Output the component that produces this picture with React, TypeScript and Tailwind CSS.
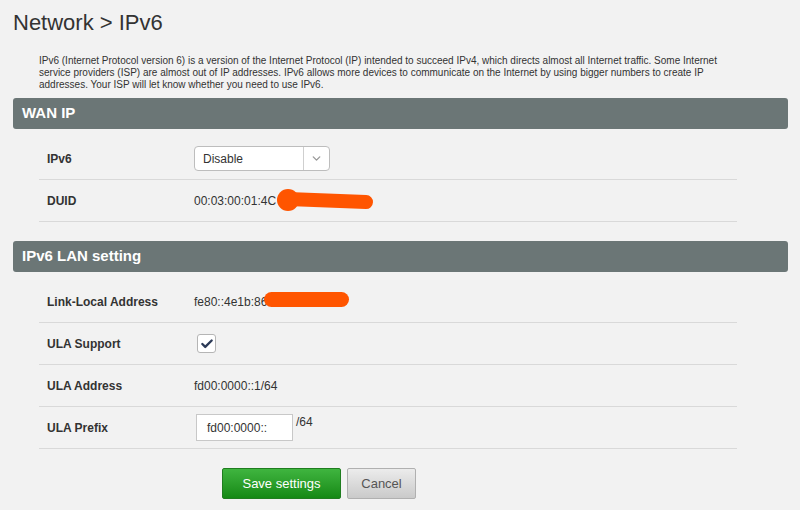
import { Check, ChevronDown } from "lucide-react";

function SectionHeader({ title }: { title: string }) {
  return (
    <div className="mx-[13px] mr-[12px] h-[31px] rounded-[3px] bg-[#6b7676] pl-[9px] flex items-center">
      <h2 className="text-[15px] font-bold text-white">{title}</h2>
    </div>
  );
}

function Row({
  label,
  children,
  valueClass = "items-center",
}: {
  label: string;
  children: React.ReactNode;
  valueClass?: string;
}) {
  return (
    <div className="flex h-[42px] items-center border-b border-[#d9d9d9] pl-2">
      <div className="w-[147px] text-[12px] font-bold text-[#333]">{label}</div>
      <div className={`relative flex h-full flex-1 ${valueClass}`}>{children}</div>
    </div>
  );
}

export default function App() {
  return (
    <div className="min-h-[510px] w-[800px] bg-[#f2f2f2] font-['Liberation_Sans',Arial,sans-serif] text-[#333]">
      <h1 className="pl-[13px] pt-[10px] text-[22px] leading-[26px] text-[#333]">
        Network &gt; IPv6
      </h1>

      <p className="ml-[39px] mt-[19px] w-[706px] text-[10px] leading-[12px] text-[#333]">
        IPv6 (Internet Protocol version 6) is a version of the Internet Protocol (IP) intended to
        succeed IPv4, which directs almost all Internet traffic. Some Internet service providers
        (ISP) are almost out of IP addresses. IPv6 allows more devices to communicate on the
        Internet by using bigger numbers to create IP addresses. Your ISP will let know whether
        you need to use IPv6.
      </p>

      <div className="mt-[7px]">
        <SectionHeader title="WAN IP" />
      </div>
      <div className="ml-[39px] mt-[9px] w-[698px]">
        <Row label="IPv6">
          <div className="flex h-[25px] w-[136px] items-center rounded-[4px] border border-[#bdbdbd] bg-white">
            <span className="flex-1 pl-[8px] text-[12px] text-[#333]">Disable</span>
            <span className="flex h-full w-[26px] items-center justify-center border-l border-[#cfcfcf]">
              <ChevronDown size={13} strokeWidth={2.5} className="text-[#999]" />
            </span>
          </div>
        </Row>
        <Row label="DUID">
          <span className="text-[12px] text-[#333]">00:03:00:01:4C</span>
          <svg
            className="absolute left-0 top-0"
            width="200"
            height="41"
            viewBox="0 0 200 41"
          >
            <circle cx="94" cy="20" r="11" fill="#ff5500" />
            <line
              x1="94"
              y1="19"
              x2="172"
              y2="22"
              stroke="#ff5500"
              strokeWidth="14"
              strokeLinecap="round"
            />
          </svg>
        </Row>
      </div>

      <div className="mt-[19px]">
        <SectionHeader title="IPv6 LAN setting" />
      </div>
      <div className="ml-[39px] mt-[9px] w-[698px]">
        <Row label="Link-Local Address">
          <span className="text-[12px] text-[#333]">fe80::4e1b:86</span>
          <span className="absolute left-[70px] top-[11px] h-[15px] w-[85px] rounded-full bg-[#ff5500]" />
        </Row>
        <Row label="ULA Support">
          <span className="ml-[3px] flex h-[19px] w-[19px] items-center justify-center rounded-[3px] border border-[#b5b5b5] bg-white">
            <Check size={14} strokeWidth={4} className="text-[#2c3a57]" />
          </span>
        </Row>
        <Row label="ULA Address">
          <span className="text-[12px] text-[#333]">fd00:0000::1/64</span>
        </Row>
        <Row label="ULA Prefix">
          <div className="ml-[2px] flex h-[27px] w-[97px] items-center border border-[#c8c8c8] bg-white pl-[10px] text-[12px] text-[#333]">
            fd00:0000::
          </div>
          <span className="ml-[3px] self-start pt-[6px] text-[12px] text-[#333]">/64</span>
        </Row>
      </div>

      <div className="ml-[222px] mt-[19px] flex gap-[6px]">
        <button className="h-[31px] w-[119px] rounded-[2px] border border-[#1f7d1f] bg-gradient-to-b from-[#3fb53f] to-[#148914] text-[13px] text-white">
          Save settings
        </button>
        <button className="h-[31px] w-[69px] rounded-[2px] border border-[#b0b0b0] bg-gradient-to-b from-[#ececec] to-[#cacaca] text-[13px] text-[#555]">
          Cancel
        </button>
      </div>
    </div>
  );
}
